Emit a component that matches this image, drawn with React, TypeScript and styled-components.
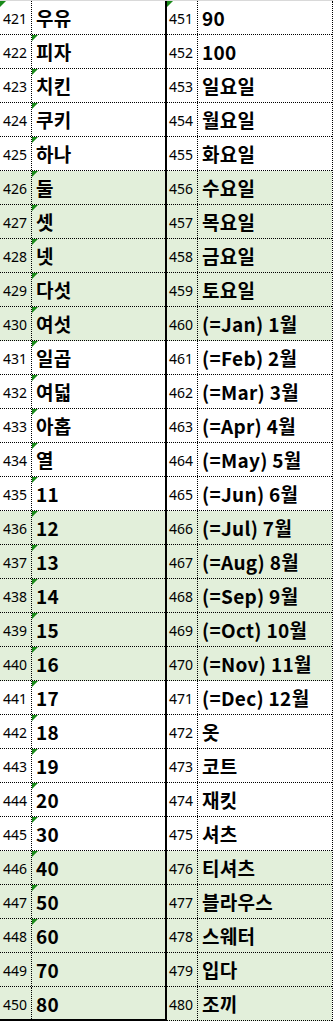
import React from "react";
import styled, { createGlobalStyle } from "styled-components";

const GlobalStyle = createGlobalStyle`
  html, body {
    margin: 0;
    padding: 0;
    background: #ffffff;
  }
`;

const LEFT = [
  "우유", "피자", "치킨", "쿠키", "하나", "둘", "셋", "넷", "다섯", "여섯",
  "일곱", "여덟", "아홉", "열", "11", "12", "13", "14", "15", "16",
  "17", "18", "19", "20", "30", "40", "50", "60", "70", "80",
];

const RIGHT = [
  "90", "100", "일요일", "월요일", "화요일", "수요일", "목요일", "금요일", "토요일", "(=Jan) 1월",
  "(=Feb) 2월", "(=Mar) 3월", "(=Apr) 4월", "(=May) 5월", "(=Jun) 6월", "(=Jul) 7월", "(=Aug) 8월", "(=Sep) 9월", "(=Oct) 10월", "(=Nov) 11월",
  "(=Dec) 12월", "옷", "코트", "재킷", "셔츠", "티셔츠", "블라우스", "스웨터", "입다", "조끼",
];

const Sheet = styled.div`
  display: flex;
  width: 333px;
  border-top: 1px solid #d9d9d9;
  font-family: "Noto Sans CJK KR", "Noto Sans", sans-serif;
  color: #000;
`;

const Block = styled.div<{ $first?: boolean }>`
  display: flex;
  flex-direction: column;
  width: ${(p) => (p.$first ? "167px" : "166px")};
  border-right: ${(p) => (p.$first ? "2px solid #000" : "1px dotted #000")};
  box-sizing: border-box;
`;

const Row = styled.div<{ $shaded: boolean; $last: boolean; $thick: boolean; $numW: number }>`
  display: grid;
  grid-template-columns: ${(p) => p.$numW}px 1fr;
  height: 34px;
  box-sizing: border-box;
  background: ${(p) => (p.$shaded ? "#e2efda" : "#ffffff")};
  border-bottom: ${(p) =>
    p.$last && p.$thick ? "2px solid #000" : "1px dotted #000"};
`;

const Cell = styled.div`
  position: relative;
  display: flex;
  align-items: center;
  overflow: hidden;
  white-space: nowrap;
`;

const NumCell = styled(Cell)`
  justify-content: flex-end;
  padding: 2px 4px 0 0;
  border-right: 1px dotted #000;
  font-family: "Noto Sans", sans-serif;
  font-size: 14px;
`;

const TextCell = styled(Cell)`
  padding: 0 0 0 4px;
  font-size: 19px;
  font-weight: 700;
  letter-spacing: 0.3px;
`;

const Marker = styled.span`
  position: absolute;
  top: 0;
  left: 0;
  width: 6px;
  height: 6px;
  background: #1a8a1a;
  clip-path: polygon(0 0, 100% 0, 0 100%);
`;

interface ColumnProps {
  start: number;
  labels: string[];
  first?: boolean;
}

function Column({ start, labels, first }: ColumnProps): React.ReactElement {
  return (
    <Block $first={first}>
      {labels.map((label, i) => {
        const n = start + i;
        const numMark = n === 421 || n === 451;
        const textMark = first && n >= 422 && n <= 448;
        return (
          <Row
            key={n}
            $shaded={Math.floor(i / 5) % 2 === 1}
            $last={i === labels.length - 1}
            $thick={!!first}
            $numW={first ? 32 : 31}
          >
            <NumCell>
              {numMark && <Marker />}
              {n}
            </NumCell>
            <TextCell>
              {textMark && <Marker />}
              {label}
            </TextCell>
          </Row>
        );
      })}
    </Block>
  );
}

export default function App(): React.ReactElement {
  return (
    <>
      <GlobalStyle />
      <Sheet>
        <Column start={421} labels={LEFT} first />
        <Column start={451} labels={RIGHT} />
      </Sheet>
    </>
  );
}
